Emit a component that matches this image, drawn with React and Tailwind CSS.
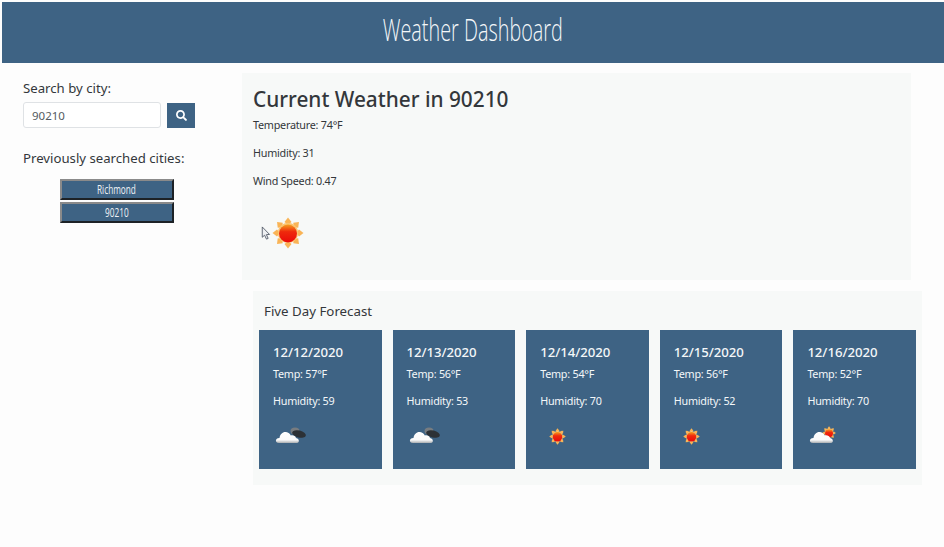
import { FaSearch } from 'react-icons/fa';

const forecast = [
  { date: '12/12/2020', temp: 57, humidity: 59, icon: 'dark' },
  { date: '12/13/2020', temp: 56, humidity: 53, icon: 'dark' },
  { date: '12/14/2020', temp: 54, humidity: 70, icon: 'sun' },
  { date: '12/15/2020', temp: 56, humidity: 52, icon: 'sun' },
  { date: '12/16/2020', temp: 52, humidity: 70, icon: 'partly' },
];

const rays = [0, 45, 90, 135, 180, 225, 270, 315];

const SunShape = () => (
  <>
    {rays.map((r) => (
      <path key={r} d="M16 0.5 L19.5 5 L16 8 L12.5 5 Z" fill="#f9b456" transform={`rotate(${r} 16 16)`} />
    ))}
    <circle cx="16" cy="16" r="10.2" fill="#fbc470" />
    <circle cx="16" cy="16.5" r="9" fill="url(#sunBody)" />
  </>
);

const SunDefs = () => (
  <defs>
    <linearGradient id="sunBody" x1="0" y1="0" x2="0" y2="1">
      <stop offset="0" stopColor="#f6a020" />
      <stop offset="0.4" stopColor="#ef2a0c" />
      <stop offset="1" stopColor="#e90a0a" />
    </linearGradient>
  </defs>
);

const SunIcon = ({ size, className }) => (
  <svg width={size} height={size} viewBox="0 0 32 32" className={className}>
    <SunDefs />
    <SunShape />
  </svg>
);

const CloudDefs = () => (
  <defs>
    <linearGradient id="cloudBody" x1="0" y1="0" x2="0" y2="1">
      <stop offset="0" stopColor="#ffffff" />
      <stop offset="0.72" stopColor="#fbfbfb" />
      <stop offset="1" stopColor="#a9adb0" />
    </linearGradient>
  </defs>
);

const Cloud = () => (
  <path
    d="M4 17 C1.500 17 0.500 15.500 1 14 C1.500 12.500 3 11.800 4.500 12 C5 8 8 5.500 11 6 C13.500 6.300 15 8 15.800 9.500 C18 8.800 20.500 10 21 12 C23 12.300 24.200 14 23.800 15.500 C23.400 16.600 22.500 17 21 17 Z"
    fill="url(#cloudBody)"
  />
);

const DarkCloudIcon = () => (
  <svg width="32" height="20" viewBox="0 0 32 20" className="ml-[2px]">
    <CloudDefs />
    <ellipse cx="20" cy="5" rx="4.500" ry="3.500" fill="#777c80" />
    <ellipse cx="24" cy="8" rx="7" ry="3.500" fill="#2c3136" transform="rotate(14 24 8)" />
    <Cloud />
  </svg>
);

const PartlyIcon = () => (
  <svg width="32" height="20" viewBox="0 0 32 20" className="ml-[2px]">
    <CloudDefs />
    <SunDefs />
    <g transform="translate(13 0) scale(0.44)">
      <SunShape />
    </g>
    <Cloud />
  </svg>
);

const CursorIcon = () => (
  <svg width="10" height="15" viewBox="0 0 10 16" className="absolute left-[8px] top-[9px]">
    <path d="M1 1 L1 12 L3.500 9.800 L5.500 14 L7.300 13.200 L5.400 9.200 L8.800 9 Z" fill="#eef0f2" stroke="#4a5260" strokeWidth="0.9" />
  </svg>
);

const ForecastCard = ({ date, temp, humidity, icon }) => (
  <div className="flex-1 h-[139px] bg-[#3e6384] text-[#f4f7f9] pl-[14px] pt-[13px]">
    <h5 className="text-[13.2px] tracking-[-0.05px] leading-[18px] font-medium">{date}</h5>
    <p className="text-[10.8px] tracking-[-0.25px] leading-[16px] mt-[5px]">Temp: {temp}°F</p>
    <p className="text-[10.8px] tracking-[-0.25px] leading-[16px] mt-[11px]">Humidity: {humidity}</p>
    <div className="mt-[17px] h-[20px] flex items-center">
      {icon === 'dark' && <DarkCloudIcon />}
      {icon === 'sun' && <SunIcon size={17} className="ml-[9px]" />}
      {icon === 'partly' && <PartlyIcon />}
    </div>
  </div>
);

export default function App() {
  return (
    <div className="min-h-[547px] bg-[#fdfdfd] pl-[2px] pt-[2px] text-[#33373b] font-['Noto_Sans','Open_Sans',sans-serif]">
      <header className="h-[61px] bg-[#3e6384] flex items-center justify-center pb-[6px]">
        <h1 className="text-[#f4f7f9] text-[31px] font-light origin-center scale-x-[0.64] whitespace-nowrap font-['Open_Sans',sans-serif]">
          Weather Dashboard
        </h1>
      </header>

      <div className="flex">
        <aside className="w-[240px] shrink-0 pl-[21px] pt-[16px]">
          <label className="block text-[13.2px] leading-[18px]">Search by city:</label>
          <div className="flex items-center mt-[5px] gap-[6px]">
            <input
              readOnly
              value="90210"
              className="w-[138px] h-[26px] border border-[#dfe2e5] rounded-[3px] bg-white pl-[8px] text-[11.5px] text-[#555b61] outline-none"
            />
            <button className="w-[28px] h-[25px] bg-[#3e6384] flex items-center justify-center">
              <FaSearch size={11} color="#ffffff" />
            </button>
          </div>
          <h2 className="text-[13.2px] leading-[18px] mt-[21px]">Previously searched cities:</h2>
          <div className="flex flex-col items-center w-[187px] mt-[12px] gap-[2px]">
            {['Richmond', '90210'].map((city) => (
              <button
                key={city}
                className="w-[114px] h-[21px] flex items-center justify-center bg-[#3e6384] border-2 border-t-[#8a8a8a] border-l-[#8a8a8a] border-r-[#1d2226] border-b-[#1d2226] text-[#eef2f5]"
              >
                <span className="text-[12.5px] leading-[15px] scale-x-[0.66] font-['Open_Sans',sans-serif]">{city}</span>
              </button>
            ))}
          </div>
        </aside>

        <main className="flex-1 pt-[10px]">
          <section className="w-[669px] h-[207px] bg-[#f7f9f8] pl-[11px] pt-[12px]">
            <h2 className="text-[20.8px] leading-[28px] font-medium">Current Weather in 90210</h2>
            <p className="text-[10.8px] tracking-[-0.25px] leading-[16px] mt-[4px]">Temperature: 74°F</p>
            <p className="text-[10.8px] tracking-[-0.25px] leading-[16px] mt-[12px]">Humidity: 31</p>
            <p className="text-[10.8px] tracking-[-0.25px] leading-[16px] mt-[12px]">Wind Speed: 0.47</p>
            <div className="relative mt-[28px] h-[32px] flex items-center">
              <SunIcon size={32} className="ml-[19px]" />
              <CursorIcon />
            </div>
          </section>

          <section className="w-[669px] h-[194px] ml-[11px] mt-[11px] bg-[#f7f9f8] px-[6px] pt-[11px]">
            <h3 className="text-[13.3px] leading-[18px] pl-[5px]">Five Day Forecast</h3>
            <div className="flex gap-[11px] mt-[10px]">
              {forecast.map((day) => (
                <ForecastCard key={day.date} {...day} />
              ))}
            </div>
          </section>
        </main>
      </div>
    </div>
  );
}
